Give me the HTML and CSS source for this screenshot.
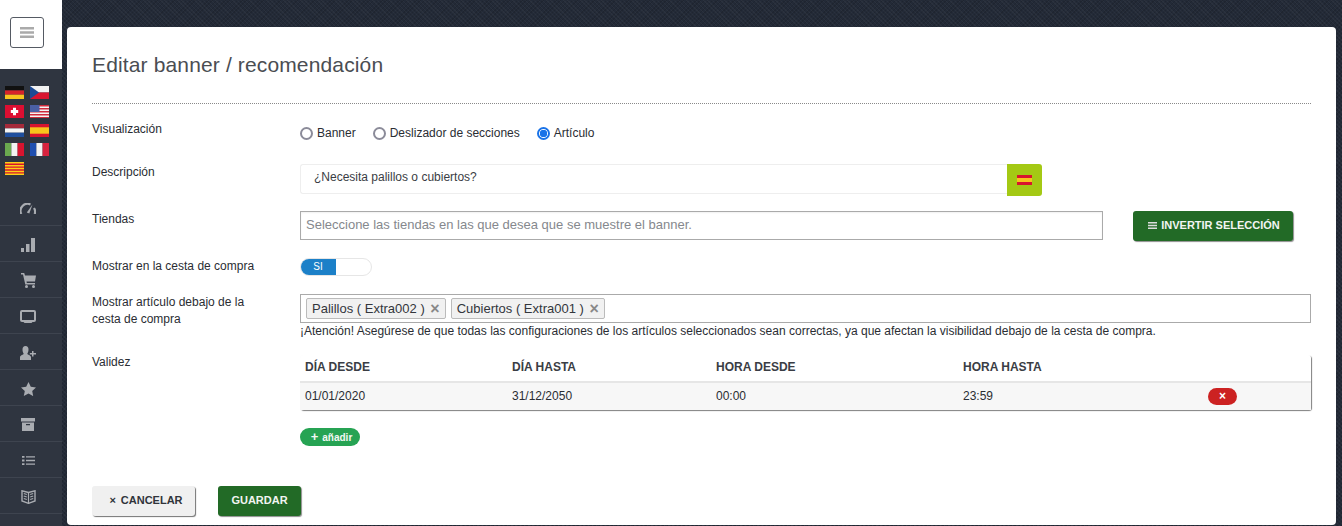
FILE: index.html
```html
<!DOCTYPE html>
<html lang="es">
<head>
<meta charset="utf-8">
<title>Editar banner</title>
<link rel="stylesheet" href="styles.css">
</head>
<body>
<div class="app">
  <aside class="sidebar">
    <div class="brand">
      <button class="burger" aria-label="menu"><svg width="14" height="11" viewBox="0 0 14 11"><path d="M0 0h14v2.4H0zM0 4.3h14v2.4H0zM0 8.6h14V11H0z" fill="#aaa"/></svg></button>
    </div>
    <div class="flags">
      <svg class="flag" viewBox="0 0 19 13"><rect width="19" height="4.4" fill="#111"/><rect y="4.4" width="19" height="4.3" fill="#d8232a"/><rect y="8.7" width="19" height="4.3" fill="#f7c51e"/></svg>
      <svg class="flag" viewBox="0 0 19 13"><rect width="19" height="6.5" fill="#f2f2f2"/><rect y="6.5" width="19" height="6.5" fill="#d8142f"/><path d="M0 0l9 6.5L0 13z" fill="#1d4a94"/></svg>
      <svg class="flag" viewBox="0 0 19 13"><rect width="19" height="13" fill="#dc0f32"/><path d="M8 2.8h3v2.2h2.2v3H11v2.2H8V8H5.800V5H8z" fill="#fff"/></svg>
      <svg class="flag" viewBox="0 0 19 13"><rect width="19" height="13" fill="#f4f4f4"/><path d="M0 0h19v1.500H0zM0 3h19v1.500H0zM0 6h19v1.500H0zM0 9h19v1.500H0zM0 12h19v1H0z" fill="#cf2a3c"/><rect width="9.500" height="7" fill="#4a5fa5"/></svg>
      <svg class="flag" viewBox="0 0 19 13"><rect width="19" height="4.400" fill="#a52a3a"/><rect y="4.400" width="19" height="4.300" fill="#f4f4f4"/><rect y="8.700" width="19" height="4.300" fill="#1f4f9e"/></svg>
      <svg class="flag" viewBox="0 0 19 13"><rect width="19" height="13" fill="#d8142f"/><rect y="3.300" width="19" height="6.400" fill="#f8c41c"/></svg>
      <svg class="flag" viewBox="0 0 19 13"><rect width="6.400" height="13" fill="#6aa84f"/><rect x="6.400" width="6.200" height="13" fill="#f2f2f2"/><rect x="12.600" width="6.400" height="13" fill="#d8142f"/></svg>
      <svg class="flag" viewBox="0 0 19 13"><rect width="6.400" height="13" fill="#1f4fb0"/><rect x="6.400" width="6.200" height="13" fill="#f2f2f2"/><rect x="12.600" width="6.400" height="13" fill="#d8233f"/></svg>
      <svg class="flag" viewBox="0 0 19 13"><rect width="19" height="13" fill="#fbd116"/><path d="M0 1.500h19v1.400H0zM0 4.400h19v1.400H0zM0 7.300h19v1.400H0zM0 10.200h19v1.400H0z" fill="#d8142f"/></svg>
    </div>
    <nav class="nav">
      <a class="nav-item"><svg width="16" height="11" viewBox="0 0 16 11"><path d="M1.300 11A7 7 0 0 1 10.500 1.500M14.700 11A7 7 0 0 0 14 5" fill="none" stroke="#a9acb1" stroke-width="2.200"/><path d="M6.800 9.500L12.500 1.500 9.300 10.500z" fill="#a9acb1"/></svg></a>
      <a class="nav-item"><svg width="14" height="14" viewBox="0 0 14 14"><path d="M0 10h3v4H0zM5 6h3.500v8H5zM10 0h4v14h-4z" fill="#a9acb1"/></svg></a>
      <a class="nav-item"><svg width="15" height="15" viewBox="0 0 15 15"><path d="M0 0h3.200l.8 2.500H15l-1 6H5.500l.3 1.500H14v1.500H4.300L2 1.500H0z" fill="#a9acb1"/><circle cx="5.500" cy="13.500" r="1.500" fill="#a9acb1"/><circle cx="12.500" cy="13.500" r="1.500" fill="#a9acb1"/></svg></a>
      <a class="nav-item"><svg width="16" height="13" viewBox="0 0 16 13"><path d="M2 0h12a2 2 0 0 1 2 2v8a2 2 0 0 1-2 2h-1.500l-1 1h-7l-1-1H2a2 2 0 0 1-2-2V2a2 2 0 0 1 2-2zM2 2v8h12V2z" fill="#a9acb1" fill-rule="evenodd"/></svg></a>
      <a class="nav-item"><svg width="16" height="14" viewBox="0 0 16 14"><path d="M5.500 0c2 0 3 1.500 3 3.500S7.800 7 7.300 7.800c0 1 3.700 1.400 3.700 3.500V14H0v-2.700c0-2.100 3.700-2.500 3.700-3.500C3.200 7 2.500 5.500 2.500 3.500S3.500 0 5.500 0z" fill="#a9acb1"/><path d="M12 5h1.500v2H16v1.500h-2.500v2H12v-2H9.800V7H12z" fill="#a9acb1"/></svg></a>
      <a class="nav-item"><svg width="15" height="14" viewBox="0 0 15 14"><path d="M7.500 0l2.300 4.800 5.200.6-3.800 3.600 1 5.100-4.700-2.500L2.800 14l1-5.100L0 5.400l5.200-.6z" fill="#a9acb1"/></svg></a>
      <a class="nav-item"><svg width="14" height="13" viewBox="0 0 14 13"><path d="M0 0h14v3.500H0zM1 4.500h12V13H1zM5 6v1.300h4V6z" fill="#a9acb1" fill-rule="evenodd"/></svg></a>
      <a class="nav-item"><svg width="13" height="9" viewBox="0 0 13 9"><path d="M0 0h2.500v1.800H0zM4 .2h9v1.400H4zM0 3.600h2.500v1.800H0zM4 3.800h9v1.400H4zM0 7.200h2.500V9H0zM4 7.400h9v1.400H4z" fill="#a9acb1"/></svg></a>
      <a class="nav-item"><svg width="15" height="14" viewBox="0 0 15 14"><path d="M7.500 2.500L1 .8v10.200l6.500 2.300 6.500-2.300V.8z" fill="none" stroke="#a9acb1" stroke-width="1.400"/><path d="M7.500 2.500V14M2.800 3.500l3 1M2.800 6l3 1M2.800 8.500l3 1M12.200 3.500l-3 1M12.200 6l-3 1M12.200 8.500l-3 1" stroke="#a9acb1" stroke-width="1.200" fill="none"/></svg></a>
    </nav>
  </aside>
  <main class="stage">
    <section class="card">
      <h1 class="title">Editar banner / recomendación</h1>
      <div class="form">
        <div class="row row-visual">
          <div class="label">Visualización</div>
          <div class="radios">
            <label class="radio"><span class="dot"></span>Banner</label>
            <label class="radio"><span class="dot"></span>Deslizador de secciones</label>
            <label class="radio"><span class="dot on"></span>Artículo</label>
          </div>
        </div>
        <div class="row row-desc">
          <div class="label">Descripción</div>
          <div class="desc-group">
            <div class="desc-input">¿Necesita palillos o cubiertos?</div>
            <div class="lang-btn"><svg width="15" height="10" viewBox="0 0 15 10"><rect width="15" height="10" fill="#d8142f"/><rect y="3" width="15" height="4" fill="#f8c41c"/></svg></div>
          </div>
        </div>
        <div class="row row-shops">
          <div class="label">Tiendas</div>
          <div class="shops-group">
            <div class="shops-input">Seleccione las tiendas en las que desea que se muestre el banner.</div>
            <button class="btn btn-green btn-invert"><svg width="9" height="7" viewBox="0 0 9 7"><path d="M0 0h9v1.500H0zM0 2.700h9v1.500H0zM0 5.400h9v1.500H0z" fill="#ddd"/></svg>INVERTIR SELECCIÓN</button>
          </div>
        </div>
        <div class="row row-cart">
          <div class="label">Mostrar en la cesta de compra</div>
          <div class="switch"><span class="switch-on">SI</span></div>
        </div>
        <div class="row row-items">
          <div class="label label-wrap">Mostrar artículo debajo de la cesta de compra</div>
          <div>
            <div class="tags">
              <span class="tag">Palillos ( Extra002 ) <b class="tag-x">×</b></span>
              <span class="tag">Cubiertos ( Extra001 ) <b class="tag-x">×</b></span>
            </div>
            <div class="note">¡Atención! Asegúrese de que todas las configuraciones de los artículos seleccionados sean correctas, ya que afectan la visibilidad debajo de la cesta de compra.</div>
          </div>
        </div>
        <div class="row row-valid">
          <div class="label">Validez</div>
          <div>
            <div class="table">
              <div class="tr th">
                <span class="c1">DÍA DESDE</span><span class="c2">DÍA HASTA</span><span class="c3">HORA DESDE</span><span class="c4">HORA HASTA</span>
              </div>
              <div class="tr td">
                <span class="c1">01/01/2020</span><span class="c2">31/12/2050</span><span class="c3">00:00</span><span class="c4">23:59</span><span class="del">×</span>
              </div>
            </div>
            <button class="add"><span class="plus">+</span>añadir</button>
          </div>
        </div>
      </div>
      <div class="actions">
        <button class="btn btn-cancel"><span class="x">×</span>CANCELAR</button>
        <button class="btn btn-green btn-save">GUARDAR</button>
      </div>
    </section>
  </main>
</div>
</body>
</html>
```
FILE: styles.css
```css
* { box-sizing: border-box; }
html, body { margin: 0; padding: 0; height: 100%; overflow: hidden; }
body { font-family: "Liberation Sans", Arial, sans-serif; font-size: 12px; color: #2a2d33; background: #1f2633; }
button { font-family: inherit; }
.app { display: flex; height: 526px; }

.sidebar { width: 62px; flex: none; background: #2f3540; }
.brand { height: 69px; background: #fff; padding: 17px 0 0 10px; }
.burger { width: 34px; height: 31px; padding: 0; display: flex; align-items: center; justify-content: center; background: #fff; border: 1px solid #555a63; border-radius: 3px; }
.flags { display: grid; grid-template-columns: 19px 19px; column-gap: 6px; row-gap: 6px; padding: 17px 0 0 5px; height: 121px; align-content: start; }
.flag { width: 19px; height: 13px; display: block; }
.nav-item { height: 36px; display: flex; align-items: center; justify-content: center; padding: 2px 6px 0 0; border-bottom: 1px solid #3e444f; }

.stage { flex: 1; padding: 27px 6px 0 5px; background-color: #232a37;
  background-image: repeating-linear-gradient(45deg, rgba(255,255,255,.035) 0 1px, transparent 1px 3px), repeating-linear-gradient(-45deg, rgba(0,0,0,.12) 0 1px, transparent 1px 3px); }
.card { background: #fff; height: 498px; border-radius: 4px; padding: 25px 25px 0; }
.title { margin: 0; font-size: 21px; font-weight: 400; line-height: 25px; letter-spacing: .14px; color: #4a4d52; height: 52px; border-bottom: 1px dotted #8a8a8a; }

.row { display: grid; grid-template-columns: 208px 1fr; }
.label { line-height: 14px; color: #2a2d33; }
.label-wrap { line-height: 17px; padding-right: 30px; }

.row-visual { padding-top: 18px; height: 60px; }
.radios { display: flex; gap: 17px; padding-top: 3px; }
.radio { display: flex; align-items: center; gap: 4px; height: 14px; margin-top: 1px; }
.dot { width: 13px; height: 13px; border-radius: 50%; border: 2px solid #8b8b99; background: #fff; }
.dot.on { border-color: #1a73e8; background: radial-gradient(circle, #1a73e8 0 3.500px, #fff 4px); }

.row-desc { height: 47px; }
.row-desc .label { padding-top: 1px; }
.desc-group { display: flex; align-items: flex-start; }
.desc-input { width: 707px; height: 30px; padding: 0 13px; line-height: 25px; border: 1px solid #eee; border-right: 0; border-radius: 3px 0 0 3px; color: #3a3d44; }
.lang-btn { width: 35px; height: 32px; background: #a4c914; border-radius: 0 3px 3px 0; display: flex; align-items: center; justify-content: center; }

.row-shops { height: 47px; }
.row-shops .label { padding-top: 1px; }
.shops-group { display: flex; align-items: flex-start; gap: 30px; }
.shops-input { width: 803px; height: 29px; padding: 0 5px; font-size: 13px; line-height: 25px; border: 1px solid #aaa; color: #85888d; box-shadow: inset 0 1px 2px rgba(0,0,0,.06); }
.btn { border: 0; border-radius: 3px; font-size: 11px; font-weight: 700; cursor: pointer; }
.btn-green { background: #226a26; color: #f2f5f2; box-shadow: 1px 1px 1px rgba(0,0,0,.45); }
.btn-invert { width: 160px; height: 30px; display: flex; align-items: center; justify-content: center; gap: 4px; padding: 0 0 2px 2px; }

.row-cart { height: 36px; }
.row-cart .label { padding-top: 1px; }
.switch { width: 72px; height: 18px; border: 1px solid #e6e6e6; border-radius: 9px; background: #fff; overflow: hidden; }
.switch-on { display: block; width: 36px; height: 18px; margin: -1px 0 0 -1px; background: #1c80c8; color: #fff; font-size: 10px; line-height: 18px; text-align: center; border-radius: 9px 0 0 9px; }

.row-items { height: 61px; }
.tags { height: 29px; border: 1px solid #aaa; padding: 3px 5px; display: flex; gap: 5px; }
.tag { height: 21px; line-height: 19px; border: 1px solid #bbb; border-radius: 2px; background: #f1f1f1; padding: 0 5px; font-size: 13px; color: #33363c; white-space: nowrap; }
.tag-x { color: #888; font-size: 16px; line-height: 16px; margin-left: 2px; vertical-align: -1px; }
.note { font-size: 12px; line-height: 16px; color: #2a2d33; }

.table { border-radius: 3px; box-shadow: 1px 1px 1px rgba(0,0,0,.5); height: 55px; }
.tr { display: flex; align-items: center; }
.th { height: 28px; font-weight: 700; color: #3a3d44; border-bottom: 2px solid #e6e6e6; padding: 0 0 3px 5px; }
.td { height: 27px; background: #f7f7f7; padding: 0 0 0 5px; color: #2a2d33; }
.td .c1, .td .c2, .td .c3, .td .c4 { padding-bottom: 2px; }
.c1 { width: 207px; }
.c2 { width: 204px; }
.c3 { width: 247px; }
.c4 { width: 245px; }
.del { width: 29px; height: 17px; border-radius: 9px; background: #cc2222; color: #fff; font-weight: 700; font-size: 12px; line-height: 16px; text-align: center; }
.add { display: flex; align-items: center; justify-content: center; gap: 4px; margin-top: 18px; width: 60px; height: 18px; padding: 0 0 0 3px; border: 0; border-radius: 9px; background: #26a353; color: #f2f8f4; font-size: 10px; font-weight: 700; }
.plus { font-size: 13px; line-height: 14px; }

.actions { display: flex; gap: 23px; margin-top: 40px; }
.btn-cancel { width: 103px; height: 30px; background: #f0f0f0; color: #30343b; box-shadow: 1px 1px 1px rgba(0,0,0,.55); padding: 0 0 2px 5px; }
.btn-cancel .x { margin-right: 5px; }
.btn-save { width: 83px; height: 30px; padding: 0 0 2px; }
```
